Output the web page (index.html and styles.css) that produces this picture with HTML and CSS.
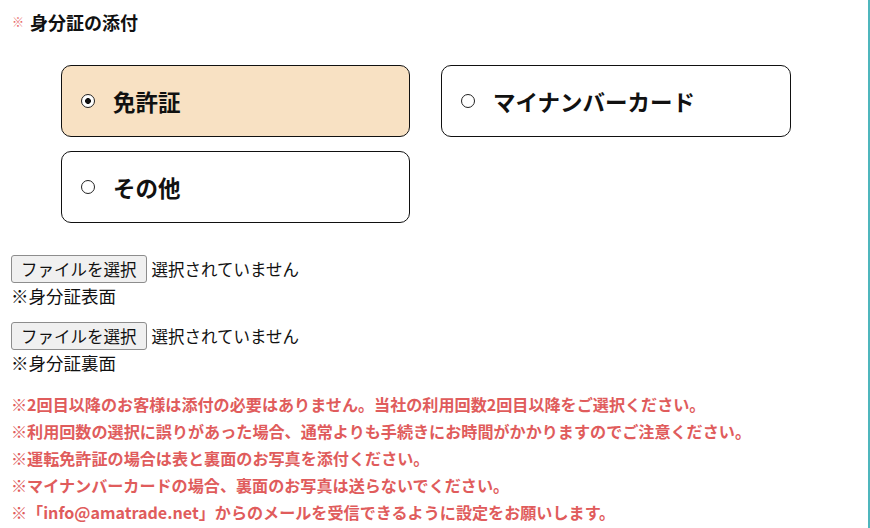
FILE: index.html
```html
<!DOCTYPE html>
<html lang="ja">
<head>
<meta charset="utf-8">
<title>身分証の添付</title>
<link rel="stylesheet" href="styles.css">
</head>
<body>
<div class="page">
  <h2 class="title"><span class="req">※</span>身分証の添付</h2>

  <div class="choices">
    <label class="choice is-checked"><input type="radio" name="idtype" class="radio" checked><span class="choice-text">免許証</span></label>
    <label class="choice"><input type="radio" name="idtype" class="radio"><span class="choice-text">マイナンバーカード</span></label>
    <label class="choice"><input type="radio" name="idtype" class="radio"><span class="choice-text">その他</span></label>
  </div>

  <div class="upload">
    <div class="file-row"><button type="button" class="file-btn">ファイルを選択</button><span class="file-name">選択されていません</span></div>
    <div class="file-caption">※身分証表面</div>
  </div>
  <div class="upload">
    <div class="file-row"><button type="button" class="file-btn">ファイルを選択</button><span class="file-name">選択されていません</span></div>
    <div class="file-caption">※身分証裏面</div>
  </div>

  <div class="notes">
    <p>※2回目以降のお客様は添付の必要はありません。当社の利用回数2回目以降をご選択ください。</p>
    <p>※利用回数の選択に誤りがあった場合、通常よりも手続きにお時間がかかりますのでご注意ください。</p>
    <p>※運転免許証の場合は表と裏面のお写真を添付ください。</p>
    <p>※マイナンバーカードの場合、裏面のお写真は送らないでください。</p>
    <p>※「info@amatrade.net」からのメールを受信できるように設定をお願いします。</p>
  </div>
</div>
</body>
</html>
```

FILE: styles.css
```css
html, body {
  margin: 0;
  padding: 0;
  background: #fff;
}
body {
  font-family: "Noto Sans CJK JP", "Noto Sans", "Liberation Sans", sans-serif;
  color: #111;
}
.page {
  width: 870px;
  min-height: 528px;
  box-sizing: border-box;
  border-right: 2px solid #4fb6bd;
  padding: 8px 0 0 11px;
  overflow: hidden;
}
.title {
  margin: 0;
  font-size: 18px;
  line-height: 28px;
  font-weight: 700;
  color: #111;
  display: flex;
  align-items: center;
}
.req {
  color: #e86a6a;
  font-size: 12px;
  font-weight: 400;
  margin-left: 1px;
  margin-right: 6px;
}
.choices {
  margin: 29px 0 0 50px;
  display: grid;
  grid-template-columns: 349px 350px;
  column-gap: 31px;
  row-gap: 14px;
}
.choice {
  height: 72px;
  box-sizing: border-box;
  border: 1px solid #111;
  border-radius: 10px;
  display: flex;
  align-items: center;
  padding-left: 19px;
  background: #fff;
  cursor: pointer;
}
.choice.is-checked {
  background: #f8e1c3;
}
.radio {
  appearance: none;
  -webkit-appearance: none;
  margin: 0 18px 0 0;
  width: 14px;
  height: 14px;
  border: 1.5px solid #222;
  border-radius: 50%;
  background: #fff;
  box-sizing: border-box;
  flex: none;
}
.radio:checked {
  background: radial-gradient(circle, #111 0 2.6px, #fff 3.2px);
}
.choice-text {
  font-size: 22.5px;
  font-weight: 700;
  line-height: 30px;
  color: #111;
}
.upload {
  font-size: 16px;
}
.upload + .upload {
  margin-top: 14px;
}
.choices + .upload {
  margin-top: 32px;
}
.file-row {
  display: flex;
  align-items: center;
  height: 28px;
}
.file-btn {
  font-family: inherit;
  font-size: 16.5px;
  line-height: 26px;
  height: 28px;
  padding: 0 9px;
  margin: 0 5px 0 0;
  border: 1px solid #8d8d8d;
  border-radius: 3px;
  background: #f0f0f0;
  color: #111;
}
.file-name {
  font-size: 16.5px;
  line-height: 28px;
}
.file-caption {
  font-size: 17.5px;
  line-height: 24px;
  margin-top: 1px;
}
.notes {
  margin-top: 16px;
  color: #e05c5c;
  font-size: 16.1px;
  font-weight: 700;
}
.notes p {
  margin: 0;
  line-height: 27px;
  white-space: nowrap;
}
```
